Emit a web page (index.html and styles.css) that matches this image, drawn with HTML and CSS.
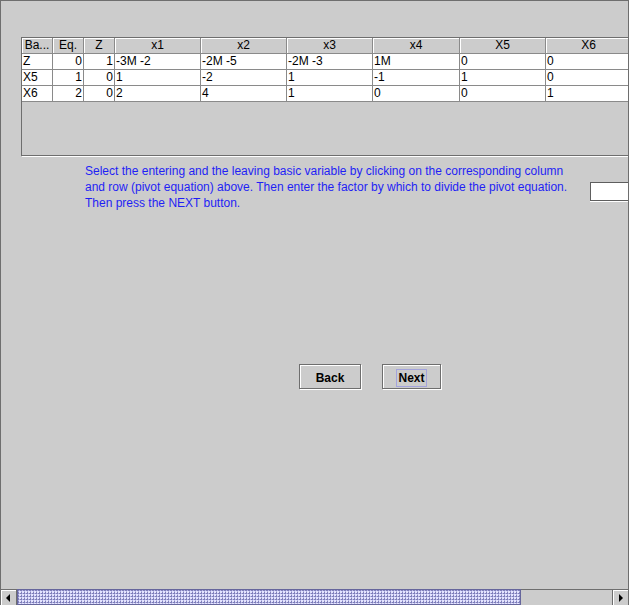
FILE: index.html
```html
<!DOCTYPE html>
<html lang="en">
<head>
<meta charset="utf-8">
<title>Simplex tableau</title>
<link rel="stylesheet" href="styles.css">
</head>
<body>
<div class="frame">
  <div class="content">
    <div class="scrollpane">
      <div class="tableau">
        <div class="th">Ba...</div><div class="th">Eq.</div><div class="th">Z</div><div class="th">x1</div><div class="th">x2</div><div class="th">x3</div><div class="th">x4</div><div class="th">X5</div><div class="th">X6</div>

        <div class="td">Z</div><div class="td num">0</div><div class="td num">1</div><div class="td">-3M -2</div><div class="td">-2M -5</div><div class="td">-2M -3</div><div class="td">1M</div><div class="td">0</div><div class="td">0</div>

        <div class="td">X5</div><div class="td num">1</div><div class="td num">0</div><div class="td">1</div><div class="td">-2</div><div class="td">1</div><div class="td">-1</div><div class="td">1</div><div class="td">0</div>

        <div class="td">X6</div><div class="td num">2</div><div class="td num">0</div><div class="td">2</div><div class="td">4</div><div class="td">1</div><div class="td">0</div><div class="td">0</div><div class="td">1</div>
      </div>
    </div>

    <div class="instr-row">
      <p class="instr">Select the entering and the leaving basic variable by clicking on the corresponding column<br>and row (pivot equation) above. Then enter the factor by which to divide the pivot equation.<br>Then press the NEXT button.</p>
      <div class="field"></div>
    </div>

    <div class="buttons">
      <button class="btn btn-back" type="button">Back</button>
      <button class="btn btn-next" type="button"><span class="focus">Next</span></button>
    </div>
  </div>

  <div class="hscroll">
    <div class="arrow arrow-left"><span class="tri tri-left"></span></div>
    <div class="thumb"></div>
    <div class="track"></div>
    <div class="arrow arrow-right"><span class="tri tri-right"></span></div>
  </div>
</div>
</body>
</html>
```

FILE: styles.css
```css
html, body {
  margin: 0;
  padding: 0;
  background: #cccccc;
}

body {
  font-family: "Liberation Sans", Arial, sans-serif;
  font-size: 12px;
}

.frame {
  width: 629px;
  height: 605px;
  box-sizing: border-box;
  border-top: 1px solid #6e6e6e;
  border-left: 1px solid #6e6e6e;
  border-right: 1px solid #6e6e6e;
  background: #cccccc;
  display: flex;
  flex-direction: column;
  overflow: hidden;
}

.content {
  display: flex;
  flex-direction: column;
  flex: 1;
  min-height: 0;
}

/* table scroll pane */
.scrollpane {
  margin: 36px 0 0 20px;
  width: 610px;
  height: 117px;
  flex-shrink: 0;
  border: 1px solid #6e6e6e;
  box-shadow: 1px 1px 0 #ffffff;
  background: #cccccc;
}

.tableau {
  display: grid;
  grid-template-columns: 31px 31px 31px 86px 86px 86px 87px 86px 86px;
  grid-auto-rows: 16px;
}

.th, .td {
  box-sizing: border-box;
  height: 16px;
  line-height: 15px;
  white-space: nowrap;
  overflow: hidden;
  color: #000000;
  border-right: 1px solid #8a8a8a;
  border-bottom: 1px solid #8a8a8a;
}

.th {
  background: #cccccc;
  text-align: center;
  box-shadow: inset 1px 1px 0 #ffffff;
  padding: 0 1px;
}

.td {
  background: #ffffff;
  padding: 0 1px 0 1px;
  text-align: left;
}

.td.num {
  text-align: right;
}

/* instructions */
.instr-row {
  display: flex;
  margin-top: 7px;
  flex-shrink: 0;
}

.instr {
  margin: 0 0 0 84px;
  width: 505px;
  flex-shrink: 0;
  line-height: 16px;
  color: #1f1ff5;
  white-space: nowrap;
}

.field {
  margin-top: 19px;
  width: 60px;
  height: 19px;
  box-sizing: border-box;
  flex-shrink: 0;
  background: #ffffff;
  border: 1px solid #5e5e5e;
  box-shadow: 0 1px 0 #ffffff;
}

/* buttons */
.buttons {
  display: flex;
  gap: 21px;
  margin: 153px 0 0 298px;
}

.btn {
  box-sizing: border-box;
  height: 25px;
  margin: 0;
  padding: 2px 0 0 0;
  background: #cccccc;
  border: 1px solid #6e6e6e;
  box-shadow: inset 1px 1px 0 #ffffff, 1px 1px 0 #ffffff;
  font-family: "Liberation Sans", Arial, sans-serif;
  font-size: 12px;
  font-weight: bold;
  color: #000000;
  display: flex;
  align-items: center;
  justify-content: center;
}

.btn-back {
  width: 62px;
}

.btn-next {
  width: 59px;
}

.focus {
  display: inline-block;
  line-height: 16px;
  padding: 0 1px;
  outline: 1px solid #a3a3dc;
}

/* horizontal scrollbar */
.hscroll {
  margin-top: auto;
  height: 16px;
  display: flex;
  flex-shrink: 0;
}

.arrow {
  box-sizing: border-box;
  width: 16px;
  height: 16px;
  background: #cccccc;
  border-top: 1px solid #6e6e6e;
  box-shadow: inset 1px 1px 0 #ffffff;
  display: flex;
  align-items: center;
  justify-content: center;
}

.arrow-left {
  border-right: 1px solid #6e6e6e;
}

.arrow-right {
  border-left: 1px solid #6e6e6e;
}

.tri {
  width: 0;
  height: 0;
  border-top: 4px solid transparent;
  border-bottom: 4px solid transparent;
}

.tri-left {
  border-right: 4px solid #000000;
  margin-left: -1px;
}

.tri-right {
  border-left: 4px solid #000000;
  margin-left: 1px;
}

.thumb {
  box-sizing: border-box;
  width: 504px;
  height: 16px;
  border: 1px solid #66669c;
  background-color: #b4b4e6;
  background-image:
    radial-gradient(circle at 1px 1px, #e6e6ff 0.7px, transparent 1px),
    radial-gradient(circle at 2px 2px, #7e7eb8 0.7px, transparent 1px);
  background-size: 3px 3px, 3px 3px;
  background-position: 1px 1px, 1px 1px;
}

.track {
  flex: 1;
  box-sizing: border-box;
  height: 16px;
  background: #cccccc;
  border-top: 1px solid #6e6e6e;
}
```
